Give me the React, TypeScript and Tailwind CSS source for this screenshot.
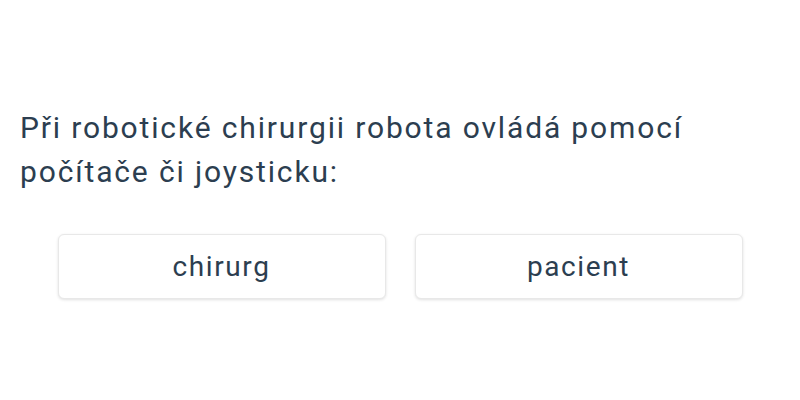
export default function App() {
  const options = ['chirurg', 'pacient'];
  return (
    <div className="w-[800px] h-[400px] bg-white px-5 pt-[106px] text-[#2c3e50]" style={{ fontFamily: 'Roboto, "Noto Sans", sans-serif' }}>
      <p className="text-[30px] leading-[44px] tracking-[1.85px]">
        Při robotické chirurgii robota ovládá pomocí počítače či joysticku:
      </p>
      <div className="mt-[40px] flex justify-center gap-[29px]">
        {options.map((o) => (
          <button
            key={o}
            className="w-[328px] h-[65px] rounded-md border border-[#e8e8e8] bg-white shadow-[0_1px_3px_rgba(0,0,0,0.12)] text-[28px] tracking-[1.6px] text-[#2c3e50]"
          >
            {o}
          </button>
        ))}
      </div>
    </div>
  );
}
